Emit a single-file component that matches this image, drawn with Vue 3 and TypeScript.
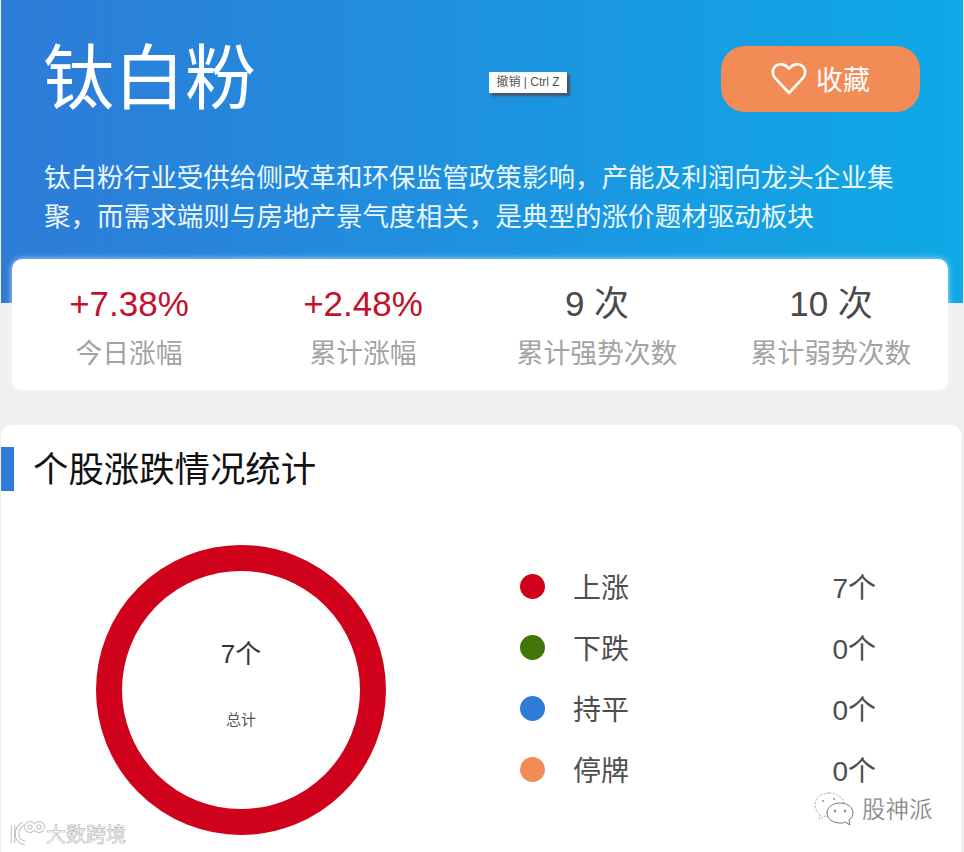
<template>
  <div class="page">
    <header class="hero">
      <div class="hero-top">
        <h1 class="name">钛白粉</h1>
        <button class="fav">
          <svg class="heart" viewBox="0 0 36 34" width="36" height="34">
            <path d="M18 31 L4.4 16.4 C0.8 12.4 1 7 4.6 4 C8.2 1.2 13.8 1.6 18 6.8 C22.2 1.6 27.8 1.2 31.4 4 C35 7 35.2 12.4 31.6 16.4 Z" fill="none" stroke="#fff" stroke-width="2.6" stroke-linejoin="round" />
          </svg>
          <span class="fav-text">收藏</span>
        </button>
      </div>
      <p class="desc">钛白粉行业受供给侧改革和环保监管政策影响，产能及利润向龙头企业集聚，而需求端则与房地产景气度相关，是典型的涨价题材驱动板块</p>
      <div class="tip">撤销 | Ctrl Z</div>
    </header>

    <section class="stats">
      <div class="stat" v-for="item in stats" :key="item.label">
        <p class="stat-value" :class="{ up: item.up }">{{ item.value }}</p>
        <p class="stat-label">{{ item.label }}</p>
      </div>
    </section>

    <section class="panel">
      <h2 class="panel-title">个股涨跌情况统计</h2>
      <div class="panel-body">
        <div class="donut">
          <p class="donut-num">7个</p>
          <p class="donut-label">总计</p>
        </div>
        <ul class="legend">
          <li class="legend-row" v-for="row in legend" :key="row.label">
            <i class="dot" :style="{ background: row.color }"></i>
            <span class="legend-label">{{ row.label }}</span>
            <span class="legend-count">{{ row.count }}个</span>
          </li>
        </ul>
      </div>
    </section>

    <div class="mark-left">
      <svg viewBox="0 0 38 26" width="38" height="26">
        <g fill="none" stroke="#bdbdbd" stroke-width="4.4">
          <path d="M5 4 V22 M15 3 C10 6 9 10 9 13 C9 18 12 21 17 22" />
          <circle cx="22" cy="6" r="3.8" />
          <circle cx="31" cy="6" r="3.8" />
        </g>
        <g fill="none" stroke="#fff" stroke-width="2.4">
          <path d="M5 4 V22 M15 3 C10 6 9 10 9 13 C9 18 12 21 17 22" />
          <circle cx="22" cy="6" r="3.8" />
          <circle cx="31" cy="6" r="3.8" />
        </g>
      </svg>
      <span>大数跨境</span>
    </div>

    <div class="mark-right">
      <svg viewBox="0 0 40 34" width="40" height="34">
        <g fill="#fff" stroke="#aaa" stroke-width="1">
          <path d="M15 1 C7 1 1 6 1 13 C1 17 3 20 6 22 L5 27 L11 24 C13 25 15 25 17 25 C25 25 30 19 30 13 C30 6 23 1 15 1 Z" stroke-dasharray="2 1.5" />
          <path d="M26 11 C18 11 13 16 13 21 C13 27 19 31 26 31 C28 31 30 31 31 30 L36 33 L35 28 C38 26 39 24 39 21 C39 16 34 11 26 11 Z" stroke="#777" />
        </g>
        <circle cx="21" cy="19" r="1.2" fill="#888" />
        <circle cx="31" cy="19" r="1.2" fill="#888" />
        <circle cx="9" cy="9" r="1.2" fill="#aaa" />
        <circle cx="20" cy="7" r="1.2" fill="#aaa" />
      </svg>
      <span>股神派</span>
    </div>
  </div>
</template>

<script setup lang="ts">
const stats = [
  { value: '+7.38%', label: '今日涨幅', up: true },
  { value: '+2.48%', label: '累计涨幅', up: true },
  { value: '9 次', label: '累计强势次数', up: false },
  { value: '10 次', label: '累计弱势次数', up: false },
];

const legend = [
  { label: '上涨', count: 7, color: '#d0021b' },
  { label: '下跌', count: 0, color: '#417505' },
  { label: '持平', count: 0, color: '#2e7bd8' },
  { label: '停牌', count: 0, color: '#f38b57' },
];
</script>

<style>
html, body {
  margin: 0;
  background: #efefef;
}
</style>

<style scoped>
.page {
  position: relative;
  width: 964px;
  height: 852px;
  overflow: hidden;
  padding: 0 3px 0 1px;
  box-sizing: border-box;
  background: #efefef;
  font-family: "Liberation Sans", "Noto Sans CJK SC", sans-serif;
}

p, h1, h2, ul {
  margin: 0;
  padding: 0;
}

.hero {
  position: relative;
  width: 962px;
  height: 303px;
  padding: 35px 43px 0 43px;
  box-sizing: border-box;
  background: linear-gradient(90deg, #2e7bd8, #0ea9e6);
  color: #fff;
}

.hero-top {
  display: flex;
  justify-content: space-between;
  align-items: center;
  height: 88px;
}

.name {
  margin-left: -1px;
  font-size: 71px;
  line-height: 88px;
  font-weight: 400;
}

.fav {
  display: flex;
  align-items: center;
  justify-content: center;
  gap: 9px;
  width: 199px;
  height: 66px;
  border: 0;
  border-radius: 24px;
  background: #f38b57;
  color: #fff;
  font-family: inherit;
  font-size: 27px;
}

.fav-text {
  margin-bottom: 2px;
}

.desc {
  margin-top: 36px;
  width: 860px;
  font-size: 26.55px;
  line-height: 39px;
  color: #e9f6fd;
}

.tip {
  position: absolute;
  left: 488px;
  top: 72px;
  width: 78px;
  height: 21px;
  line-height: 21px;
  text-align: center;
  background: #fff;
  color: #555;
  font-size: 12px;
  box-shadow: 3px 3px 2px #45566b;
}

.stats {
  position: relative;
  display: grid;
  grid-template-columns: repeat(4, 1fr);
  width: 936px;
  height: 131px;
  margin: -44px 0 0 11px;
  padding-top: 23px;
  box-sizing: border-box;
  background: #fff;
  border-radius: 10px;
  box-shadow: 0 0 6px rgba(255, 255, 255, 0.7);
  text-align: center;
}

.stat-value {
  font-size: 35px;
  line-height: 44px;
  color: #4a4a4a;
}

.stat-value.up {
  color: #c4102a;
}

.stat-label {
  margin-top: 9px;
  font-size: 26.8px;
  line-height: 38px;
  color: #a3a3a3;
}

.panel {
  width: 960px;
  height: 460px;
  margin-top: 35px;
  padding-top: 22px;
  box-sizing: border-box;
  background: #fff;
  border-radius: 10px;
}

.panel-title {
  height: 44px;
  line-height: 46px;
  padding-left: 19px;
  border-left: 13px solid #2e7bd8;
  font-size: 35.4px;
  font-weight: 400;
  color: #111;
}

.panel-body {
  display: flex;
  align-items: flex-start;
  padding: 54px 0 0 95px;
}

.donut {
  width: 290px;
  height: 290px;
  box-sizing: border-box;
  border: 26px solid #d0021b;
  border-radius: 50%;
  text-align: center;
  color: #333;
}

.donut-num {
  margin-top: 65px;
  font-size: 26px;
  line-height: 36px;
}

.donut-label {
  margin-top: 38px;
  font-size: 15px;
  line-height: 20px;
  color: #555;
}

.legend {
  list-style: none;
  width: 356px;
  margin: 11px 0 0 134px;
}

.legend-row {
  display: flex;
  align-items: center;
  height: 61px;
  font-size: 28px;
  color: #4e4e4e;
}

.dot {
  width: 25px;
  height: 25px;
  margin-right: 28px;
  border-radius: 50%;
}

.legend-label {
  flex: 1;
  margin-bottom: 2px;
}

.legend-count {
  margin-bottom: 2px;
  white-space: nowrap;
}

.mark-left {
  position: absolute;
  left: 8px;
  top: 819px;
  display: flex;
  align-items: center;
  font-size: 20px;
  color: #fff;
  -webkit-text-stroke: 0.6px #b5b5b5;
}

.mark-right {
  position: absolute;
  left: 814px;
  top: 791px;
  display: flex;
  align-items: center;
  gap: 8px;
  font-size: 23.5px;
  color: #777;
}

.mark-right span {
  margin-bottom: 2px;
  -webkit-text-stroke: 0.3px #fff;
}
</style>
